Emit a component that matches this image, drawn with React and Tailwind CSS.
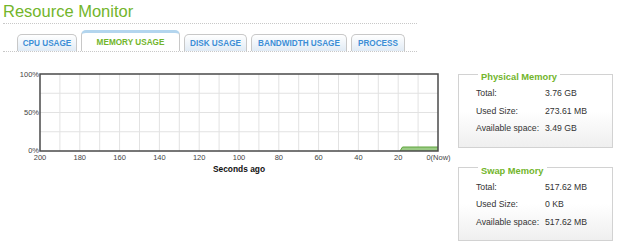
export default function App() {
  const xs = [200, 180, 160, 140, 120, 100, 80, 60, 40, 20];
  const vlines = Array.from({ length: 19 }, (_, i) => 40 + (i + 1) * 19.9);
  const hlines = [94.25, 113.5, 132.75];
  const tabs = [
    { label: "CPU USAGE", w: "w-[60px]" },
    { label: "MEMORY USAGE", w: "w-[99px]", active: true },
    { label: "DISK USAGE", w: "w-[63px]" },
    { label: "BANDWIDTH USAGE", w: "w-[96px]" },
    { label: "PROCESS", w: "w-[54px]" },
  ];
  const physical = [
    ["Total:", "3.76 GB"],
    ["Used Size:", "273.61 MB"],
    ["Available space:", "3.49 GB"],
  ];
  const swap = [
    ["Total:", "517.62 MB"],
    ["Used Size:", "0 KB"],
    ["Available space:", "517.62 MB"],
  ];

  const Box = ({ title, rows, className }) => (
    <fieldset
      className={
        "w-[155px] border border-[#d2d2d2] bg-gradient-to-b from-white from-50% to-[#efefef] pb-[9px] " +
        className
      }
    >
      <legend className="ml-[19px] px-[3px] pt-[6px] text-[9.3px] leading-[12px] font-bold text-[#72b52b]">
        {title}
      </legend>
      <div className="grid grid-cols-[69px_1fr] pl-[17px] pt-[2px] text-[8.7px] leading-[17.5px] text-[#333]">
        {rows.map(([k, v]) => (
          <div key={k} className="contents">
            <span>{k}</span>
            <span>{v}</span>
          </div>
        ))}
      </div>
    </fieldset>
  );

  return (
    <div className="w-[620px] h-[246px] bg-white overflow-hidden font-['Liberation_Sans',Arial,sans-serif]">
      <div className="pl-[3px] w-[417px]">
        <div className="h-[24px] border-b border-dotted border-[#c8c8c8]">
          <h1 className="text-[16.5px] leading-[20px] pt-[1px] text-[#72b52b]">
            Resource Monitor
          </h1>
        </div>
        <div className="h-[28px] flex items-end gap-[4px] pl-[14px] border-b border-dotted border-[#c8c8c8]">
          {tabs.map((t) =>
            t.active ? (
              <div
                key={t.label}
                className={
                  t.w +
                  " h-[21px] rounded-t-[5px] border-x border-[#c8c8c8] border-t-[3px] border-t-[#b3d5ee] bg-white pt-[3px] text-center text-[8.2px] leading-[13px] font-bold text-[#72b52b]"
                }
              >
                {t.label}
              </div>
            ) : (
              <div
                key={t.label}
                className={
                  t.w +
                  " h-[17px] rounded-t-[5px] border-x border-t border-[#c8c8c8] bg-gradient-to-b from-white to-[#e1ebf5] pt-[2px] text-center text-[8.2px] leading-[13px] font-bold text-[#3c8ed6]"
                }
              >
                {t.label}
              </div>
            )
          )}
        </div>
      </div>

      <div className="flex">
        <svg
          className="mt-[13px] shrink-0"
          width="452"
          height="112"
          viewBox="0 66 452 112"
        >
          {vlines.map((x) => (
            <line key={x} x1={x} y1="75" x2={x} y2="152" stroke="#e2e2e2" strokeWidth="1" />
          ))}
          {hlines.map((y) => (
            <line key={y} x1="40" y1={y} x2="438" y2={y} stroke="#e2e2e2" strokeWidth="1" />
          ))}
          <polygon points="400,152 402.5,148 438,148 438,152" fill="#9bcb85" />
          <polyline points="400,152 402.5,148 438,148" fill="none" stroke="#5fa43d" strokeWidth="1" />
          <rect x="40" y="75" width="398" height="77" fill="none" stroke="#4a4a4a" strokeWidth="1.5" />
          {[
            ["100%", 76],
            ["50%", 114],
            ["0%", 152],
          ].map(([t, y]) => (
            <text key={t} x="39" y={y} textAnchor="end" dominantBaseline="middle" fontSize="7.5" fill="#444">
              {t}
            </text>
          ))}
          {xs.map((v) => (
            <text key={v} x={40 + (200 - v) * 1.99} y="159" textAnchor="middle" dominantBaseline="middle" fontSize="7.5" fill="#444">
              {v}
            </text>
          ))}
          <text x="438.5" y="159" textAnchor="middle" dominantBaseline="middle" fontSize="7.5" fill="#444">
            0(Now)
          </text>
          <text x="239" y="171" textAnchor="middle" dominantBaseline="middle" fontSize="8.4" fontWeight="bold" fill="#111">
            Seconds ago
          </text>
        </svg>
        <div className="ml-[6px] mt-[13px] flex flex-col">
          <Box title="Physical Memory" rows={physical} className="" />
          <Box title="Swap Memory" rows={swap} className="mt-[11px]" />
        </div>
      </div>
    </div>
  );
}
